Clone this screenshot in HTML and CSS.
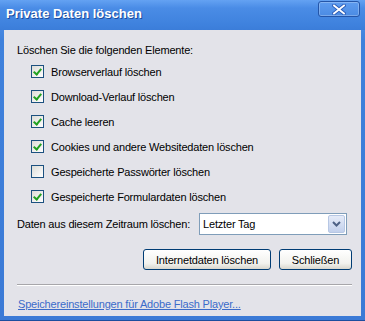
FILE: index.html
```html
<html>
<head>
    <title>Private Daten löschen</title>
    <link rel="stylesheet" href="styles.css">
</head>
<body>
    <div class="window">
        <div class="titlebar">
            <span class="title">Private Daten löschen</span>
            <button class="close" type="button">
                <svg width="14" height="11" viewBox="0 0 14 11">
                    <path d="M2 1.5 L12 9.5 M12 1.5 L2 9.5" stroke="#2a5cb8" stroke-width="3.6" stroke-linecap="square"/>
                    <path d="M2 1.5 L12 9.5 M12 1.5 L2 9.5" stroke="#fff" stroke-width="1.8" stroke-linecap="square"/>
                </svg>
            </button>
        </div>
        <div class="client">
            <p class="intro">Löschen Sie die folgenden Elemente:</p>
            <ul class="items">
                <li><span class="check on"></span>Browserverlauf löschen</li>
                <li><span class="check on"></span>Download-Verlauf löschen</li>
                <li><span class="check on"></span>Cache leeren</li>
                <li><span class="check on"></span>Cookies und andere Websitedaten löschen</li>
                <li><span class="check"></span>Gespeicherte Passwörter löschen</li>
                <li><span class="check on"></span>Gespeicherte Formulardaten löschen</li>
            </ul>
            <div class="range">
                <span>Daten aus diesem Zeitraum löschen:</span>
                <div class="select">
                    <span class="value">Letzter Tag</span>
                    <span class="arrow">
                        <svg width="9" height="6" viewBox="0 0 9 6">
                            <path d="M1 1 L4.5 4.5 L8 1" fill="none" stroke="#4d6185" stroke-width="2"/>
                        </svg>
                    </span>
                </div>
            </div>
            <div class="buttons">
                <button class="btn wide" type="button">Internetdaten löschen</button>
                <button class="btn" type="button">Schließen</button>
            </div>
            <hr class="sep">
            <a class="link" href="#">Speichereinstellungen für Adobe Flash Player...</a>
        </div>
    </div>
</body>
</html>
```

FILE: styles.css
```css
body {
    margin: 0;
    font-family: "Liberation Sans", Arial, sans-serif;
    font-size: 11px;
    letter-spacing: -0.18px;
    color: #000;
}

.window {
    width: 365px;
    height: 321px;
    box-sizing: border-box;
    background: linear-gradient(#5a9aef, #3f81dc 40px, #3b7ad6);
    border-bottom: 1px solid #1d4d9e;
    display: flex;
    flex-direction: column;
}

.titlebar {
    height: 30px;
    display: flex;
    align-items: flex-start;
    justify-content: space-between;
    background: linear-gradient(#64a2f2 0, #4a8ce6 8px, #3f82de 24px, #3b7dd9);
}

.title {
    margin: 6px 0 0 6px;
    font-size: 13px;
    font-weight: bold;
    letter-spacing: 0;
    color: #fff;
    text-shadow: 1px 1px 0 #1c4c9c;
}

.close {
    width: 42px;
    height: 16px;
    margin: 1px 5px 0 0;
    padding: 0;
    border: 1px solid #2455a8;
    border-radius: 3px;
    background: linear-gradient(#5e9cf0, #4b8be3);
    box-shadow: inset 0 0 0 1px rgba(255, 255, 255, 0.25);
    display: flex;
    align-items: center;
    justify-content: center;
}

.client {
    flex: 1;
    margin: 0 4px 4px 4px;
    background: #e3e3e9;
    padding: 13px 9px 0 13px;
}

.intro {
    margin: 0;
    line-height: 14px;
}

.items {
    list-style: none;
    margin: 8px 0 0 0;
    padding: 0 0 0 14px;
}

.items li {
    height: 25px;
    display: flex;
    align-items: flex-start;
    line-height: 14px;
}

.check {
    width: 11px;
    height: 11px;
    margin-right: 7px;
    border: 1px solid #1c5180;
    background: linear-gradient(135deg, #dcdcd7, #fff);
    position: relative;
}

.check.on::after {
    content: "";
    position: absolute;
    left: 3px;
    top: 1px;
    width: 3px;
    height: 6px;
    border: solid #21a121;
    border-width: 0 2px 2px 0;
    transform: rotate(40deg);
}

.range {
    display: flex;
    align-items: center;
    justify-content: space-between;
    margin-top: -2px;
}

.select {
    width: 146px;
    height: 20px;
    border: 1px solid #7f9db9;
    background: #fff;
    display: flex;
    align-items: center;
    justify-content: space-between;
    margin-right: 5px;
}

.value {
    padding-left: 3px;
}

.arrow {
    width: 17px;
    height: 18px;
    margin-right: 1px;
    box-sizing: border-box;
    border: 1px solid #b7c7e4;
    border-radius: 2px;
    background: linear-gradient(#e5ebf8, #c2d0ec);
    display: flex;
    align-items: center;
    justify-content: center;
}

.buttons {
    display: flex;
    justify-content: flex-end;
    gap: 8px;
    margin-top: 14px;
}

.btn {
    height: 21px;
    padding: 0;
    width: 73px;
    font-family: "Liberation Sans", Arial, sans-serif;
    font-size: 11px;
    letter-spacing: -0.18px;
    color: #000;
    border: 1px solid #003c74;
    border-radius: 3px;
    background: linear-gradient(#ffffff, #f2f2ee 70%, #d8d6cd);
}

.btn.wide {
    width: 128px;
}

.sep {
    margin: 14px 0 0 0;
    border: 0;
    border-top: 1px solid #a7a6aa;
    border-bottom: 1px solid #fff;
}

.link {
    display: block;
    margin: 11px 0 0 1px;
    color: #3b6bc9;
    line-height: 14px;
}
```
